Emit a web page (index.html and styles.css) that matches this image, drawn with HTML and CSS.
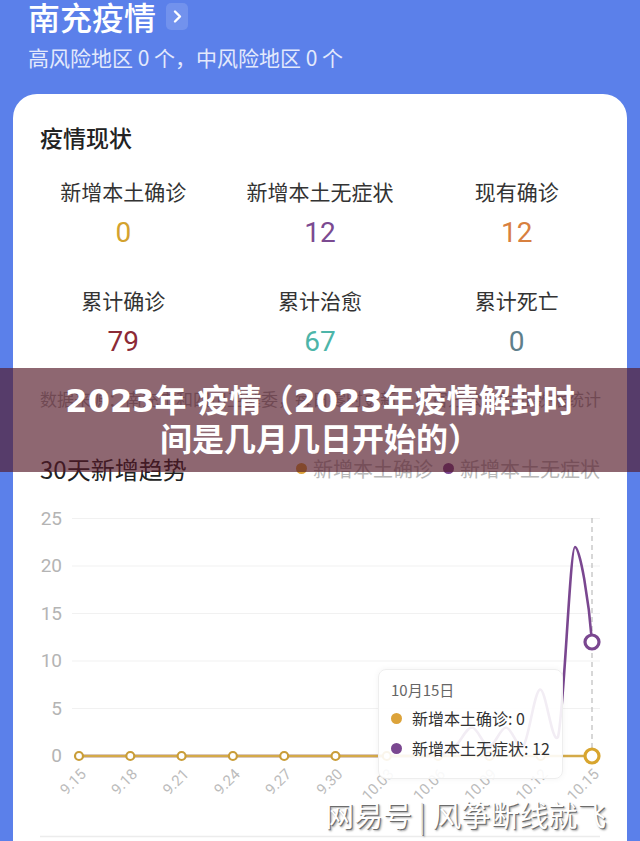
FILE: index.html
```html
<!DOCTYPE html>
<html lang="zh-CN">
<head>
  <meta charset="UTF-8">
  <meta name="viewport" content="width=device-width, initial-scale=1.0">
  <title>南充疫情</title>
  <link rel="stylesheet" href="styles.css">
</head>
<body>
  <div class="page">
    <header class="head">
      <h1 class="city">南充疫情
        <span class="more">
          <svg width="22" height="27" viewBox="0 0 22 27"><path d="M9 8.5l5 5-5 5" fill="none" stroke="#fff" stroke-width="2.4" stroke-linecap="round" stroke-linejoin="round"/></svg>
        </span>
      </h1>
      <p class="risk">高风险地区 0 个，中风险地区 0 个</p>
    </header>

    <section class="card">
      <h2 class="card-title">疫情现状</h2>
      <div class="stats">
        <div class="stat">
          <div class="stat-label">新增本土确诊</div>
          <div class="stat-num gold">0</div>
        </div>
        <div class="stat">
          <div class="stat-label">新增本土无症状</div>
          <div class="stat-num purple">12</div>
        </div>
        <div class="stat">
          <div class="stat-label">现有确诊</div>
          <div class="stat-num orange">12</div>
        </div>
        <div class="stat">
          <div class="stat-label">累计确诊</div>
          <div class="stat-num red">79</div>
        </div>
        <div class="stat">
          <div class="stat-label">累计治愈</div>
          <div class="stat-num teal">67</div>
        </div>
        <div class="stat">
          <div class="stat-label">累计死亡</div>
          <div class="stat-num slate">0</div>
        </div>
      </div>
      <p class="source">数据来源：南充市和四川卫健委，每日零时更新，以官方公布为准数据统计</p>

      <div class="trend-head">
        <h3 class="trend-title">30天新增趋势</h3>
        <div class="legend">
          <span class="legend-item"><i class="dot dot-gold"></i>新增本土确诊</span>
          <span class="legend-item"><i class="dot dot-purple"></i>新增本土无症状</span>
        </div>
      </div>

      <div class="chart">
        <svg width="614" height="351" viewBox="13 490 614 351">
          <g class="grid" stroke="#f1f1f1" stroke-width="1">
            <line x1="72" y1="517.5" x2="600" y2="517.5"/>
            <line x1="72" y1="565" x2="600" y2="565"/>
            <line x1="72" y1="612.5" x2="600" y2="612.5"/>
            <line x1="72" y1="660" x2="600" y2="660"/>
            <line x1="72" y1="707.5" x2="600" y2="707.5"/>
          </g>
          <g class="y-labels" text-anchor="end" font-size="19" fill="#b4b4b4">
            <text x="62" y="524">25</text>
            <text x="62" y="571">20</text>
            <text x="62" y="619">15</text>
            <text x="62" y="666">10</text>
            <text x="62" y="714">5</text>
            <text x="62" y="761">0</text>
          </g>
          <line x1="592" y1="517" x2="592" y2="755" stroke="#bdbdbd" stroke-width="1.2" stroke-dasharray="5 4"/>
          <path d="M79 755 L438 755 C443.7 753.4 449.3 750.3 455 745.5 C460.7 740.8 466.3 726.5 472 726.5 C477.7 726.5 483.3 745.5 489 745.5 C494.7 745.5 500.3 726.5 506 726.5 C511.7 726.5 517.3 748 523 745.5 C528.7 739.2 534.2 690.1 540 688.5 C545.8 686.9 552.2 745 558 736 C564 712 570 546 575 546 C580 546 589 600 592 641" fill="none" stroke="#7a4790" stroke-width="2.6"/>
          <line x1="79" y1="755" x2="592" y2="755" stroke="#d4aa48" stroke-width="2.6"/>
          <g fill="#fff" stroke="#c99d38" stroke-width="2.2">
            <circle cx="79" cy="755" r="4"/>
            <circle cx="130.3" cy="755" r="4"/>
            <circle cx="181.6" cy="755" r="4"/>
            <circle cx="232.9" cy="755" r="4"/>
            <circle cx="284.2" cy="755" r="4"/>
            <circle cx="335.5" cy="755" r="4"/>
            <circle cx="386.8" cy="755" r="4"/>
            <circle cx="438.1" cy="755" r="4"/>
            <circle cx="489.4" cy="755" r="4"/>
            <circle cx="540.7" cy="755" r="4"/>
          </g>
          <circle cx="592" cy="755" r="7" fill="#fff" stroke="#d8a52e" stroke-width="3.2"/>
          <circle cx="592" cy="641" r="7" fill="#fff" stroke="#7a4790" stroke-width="3.2"/>
          <g class="x-labels" text-anchor="end" font-size="15" fill="#bcbcbc">
            <text x="87" y="774" transform="rotate(-45 87 774)">9.15</text>
            <text x="138.3" y="774" transform="rotate(-45 138.3 774)">9.18</text>
            <text x="189.6" y="774" transform="rotate(-45 189.6 774)">9.21</text>
            <text x="240.9" y="774" transform="rotate(-45 240.9 774)">9.24</text>
            <text x="292.2" y="774" transform="rotate(-45 292.2 774)">9.27</text>
            <text x="343.5" y="774" transform="rotate(-45 343.5 774)">9.30</text>
            <text x="394.8" y="774" transform="rotate(-45 394.8 774)">10.03</text>
            <text x="446.1" y="774" transform="rotate(-45 446.1 774)">10.06</text>
            <text x="497.4" y="774" transform="rotate(-45 497.4 774)">10.09</text>
            <text x="548.7" y="774" transform="rotate(-45 548.7 774)">10.12</text>
            <text x="600" y="774" transform="rotate(-45 600 774)">10.15</text>
          </g>
          <line x1="40" y1="835.5" x2="600" y2="835.5" stroke="#ececec" stroke-width="1.5"/>
        </svg>

        <div class="tooltip">
          <div class="tip-date">10月15日</div>
          <div class="tip-row"><i class="dot dot-gold"></i>新增本土确诊: 0</div>
          <div class="tip-row"><i class="dot dot-purple"></i>新增本土无症状: 12</div>
        </div>
      </div>
    </section>

    <div class="banner">2023年 疫情（2023年疫情解封时间是几月几日开始的）</div>
    <div class="watermark">网易号 <span class="bar">|</span> 风筝断线就飞</div>
  </div>
</body>
</html>
```

FILE: styles.css
```css
body {
  margin: 0;
  background-color: #5b80ea;
  font-family: "Noto Sans CJK SC", "Noto Sans", sans-serif;
}
.page {
  position: relative;
  width: 640px;
  height: 841px;
  overflow: hidden;
}
.head {
  padding: 0 28px;
  color: #fff;
}
.city {
  margin: 0;
  display: flex;
  align-items: center;
  gap: 10px;
  font-size: 32px;
  font-weight: 500;
  line-height: 32px;
}
.more {
  display: flex;
  align-items: center;
  justify-content: center;
  width: 22px;
  height: 27px;
  border-radius: 5px;
  background-color: rgba(255, 255, 255, 0.14);
}
.risk {
  margin: 11px 0 0;
  font-size: 21px;
  line-height: 28px;
  color: #e3e9fc;
}
.card {
  position: relative;
  margin: 23px 13px 0;
  padding-top: 28px;
  height: 760px;
  background-color: #fff;
  border-radius: 24px 24px 0 0;
}
.card-title {
  margin: 0 0 0 27px;
  font-size: 23px;
  font-weight: 500;
  line-height: 30px;
  color: #222;
}
.stats {
  display: grid;
  grid-template-columns: repeat(3, 1fr);
  row-gap: 35px;
  margin: 24px 12px 0;
  text-align: center;
}
.stat-label {
  font-size: 21px;
  line-height: 30px;
  color: #333;
}
.stat-num {
  margin-top: 10px;
  font-family: Roboto, "Noto Sans", sans-serif;
  font-size: 28px;
  line-height: 34px;
}
.gold { color: #d3a22e; }
.purple { color: #7b4a91; }
.orange { color: #d8803f; }
.red { color: #8c2a36; }
.teal { color: #4db5a9; }
.slate { color: #5f7f8b; }
.source {
  margin: 28px 0 0 27px;
  font-size: 17px;
  line-height: 24px;
  color: #a8a8a8;
  white-space: nowrap;
}
.trend-head {
  display: flex;
  justify-content: space-between;
  align-items: center;
  height: 30px;
  margin: 42px 27px 0;
}
.trend-title {
  margin: 0;
  font-size: 24px;
  font-weight: 400;
  color: #222;
}
.legend {
  display: flex;
  gap: 10px;
  font-size: 20px;
  color: #b8b8b8;
}
.legend-item {
  display: flex;
  align-items: center;
  gap: 6px;
}
.dot {
  display: inline-block;
  width: 11px;
  height: 11px;
  border-radius: 50%;
}
.dot-gold { background-color: #dca33a; }
.dot-purple { background-color: #7a4790; }
.chart {
  position: relative;
  margin-top: 8px;
}
.chart svg {
  display: block;
  font-family: Roboto, "Noto Sans", sans-serif;
}
.tooltip {
  position: absolute;
  left: 365px;
  top: 178px;
  box-sizing: border-box;
  width: 185px;
  height: 110px;
  padding: 10px 12px 0;
  background-color: rgba(255, 255, 255, 0.9);
  border: 1px solid #eeeeee;
  border-radius: 8px;
  box-shadow: 0 0 6px rgba(0, 0, 0, 0.05);
}
.tip-date {
  font-size: 15px;
  line-height: 20px;
  color: #666;
}
.tip-row {
  display: flex;
  align-items: center;
  gap: 10px;
  margin-top: 6px;
  font-size: 16px;
  line-height: 24px;
  color: #333;
}
.tip-row:first-of-type {
  margin-top: 9px;
}
.banner {
  position: absolute;
  top: 368px;
  left: 0;
  right: 0;
  box-sizing: border-box;
  height: 104px;
  padding: 14px 56px 0;
  background-color: rgba(84, 24, 40, 0.66);
  color: #fff;
  font-family: "DejaVu Sans", "Noto Sans CJK SC", sans-serif;
  font-size: 32px;
  font-weight: bold;
  line-height: 39px;
  text-align: center;
}
.watermark {
  position: absolute;
  top: 796px;
  left: 325px;
  font-size: 29px;
  line-height: 36px;
  color: #fff;
  white-space: nowrap;
  text-shadow: 1px 1px 0 #6c6c6c, 2px 2px 2px rgba(0, 0, 0, 0.35);
}
.bar {
  font-weight: 300;
  color: #ddd;
}
```
